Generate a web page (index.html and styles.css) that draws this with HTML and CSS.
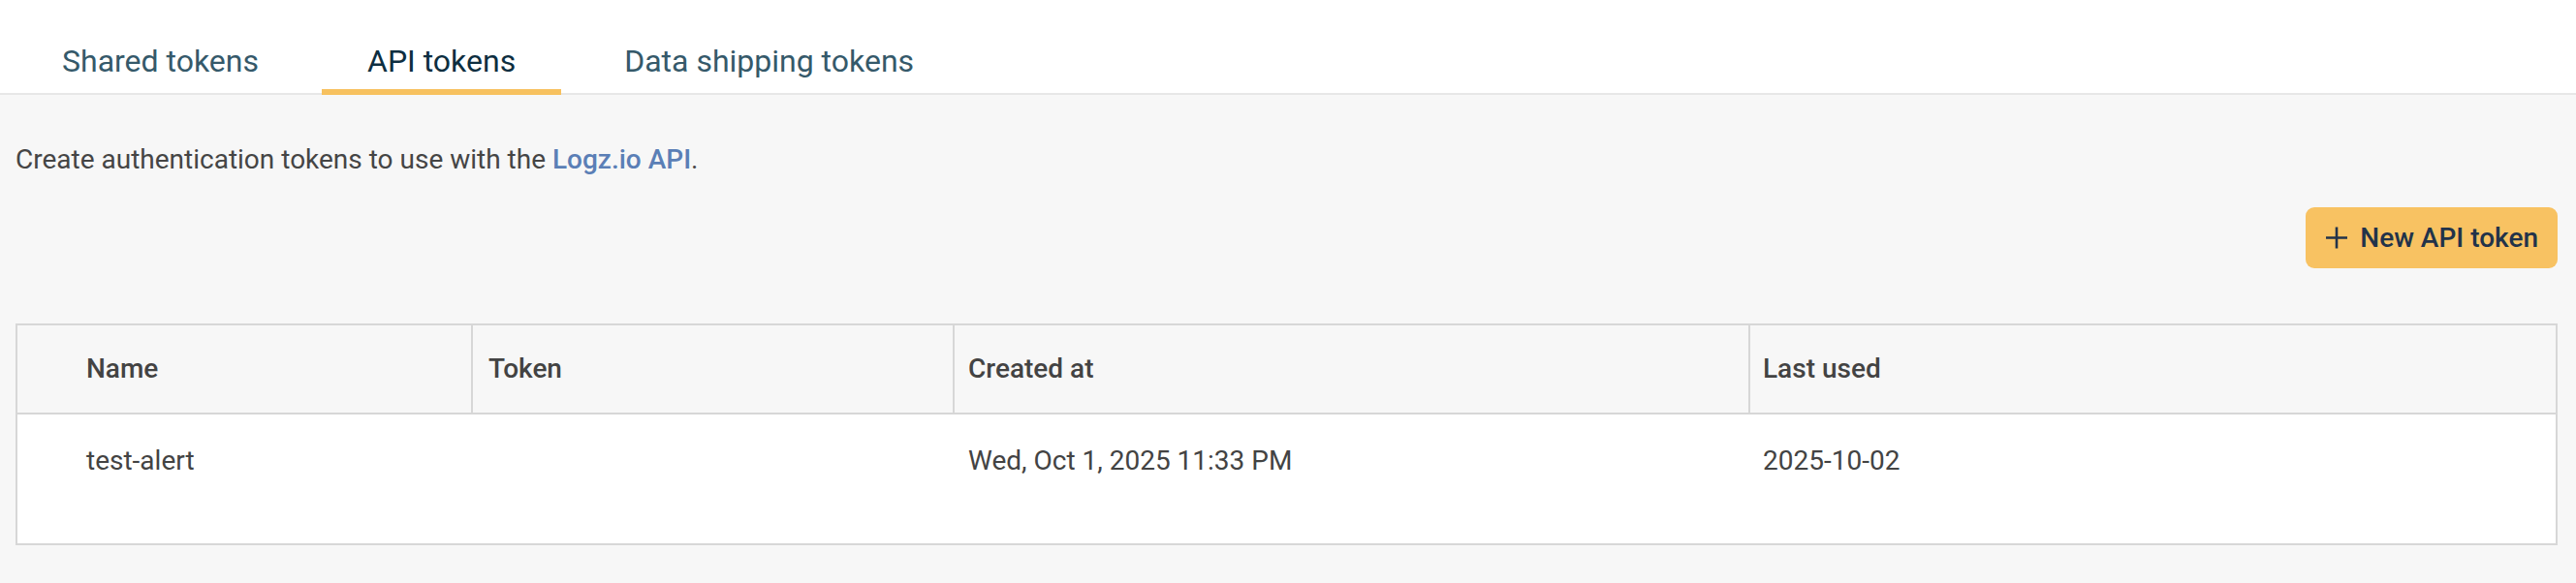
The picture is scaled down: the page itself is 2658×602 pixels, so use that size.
FILE: index.html
```html
<!DOCTYPE html>
<html lang="en">
<head>
<meta charset="utf-8">
<title>API tokens</title>
<link rel="stylesheet" href="styles.css">
</head>
<body>
  <nav class="tabs">
    <a class="tab">Shared tokens</a>
    <a class="tab tab-active">API tokens</a>
    <a class="tab">Data shipping tokens</a>
  </nav>
  <main class="content">
    <p class="desc">Create authentication tokens to use with the <a class="link">Logz.io API</a>.</p>
    <div class="actions">
      <button class="btn">
        <svg class="btn-icon" width="22" height="23" viewBox="0 0 22 23" aria-hidden="true">
          <path d="M11 0.5V22.5M0 11.5H22" stroke="#22334a" stroke-width="2.6" fill="none"/>
        </svg>
        <span>New API token</span>
      </button>
    </div>
    <div class="table">
      <div class="row row-head">
        <div class="cell cell-name">Name</div>
        <div class="cell cell-token">Token</div>
        <div class="cell cell-created">Created at</div>
        <div class="cell cell-used">Last used</div>
      </div>
      <div class="row row-body">
        <div class="cell cell-name">test-alert</div>
        <div class="cell cell-token"></div>
        <div class="cell cell-created">Wed, Oct 1, 2025 11:33 PM</div>
        <div class="cell cell-used">2025-10-02</div>
      </div>
    </div>
  </main>
</body>
</html>
```
FILE: styles.css
```css
* { box-sizing: border-box; }

html, body {
  margin: 0;
  padding: 0;
}

body {
  background: #f7f7f7;
  font-family: Roboto, "Liberation Sans", Arial, sans-serif;
  color: #434343;
}

.tabs {
  display: flex;
  gap: 18px;
  padding: 0 17px;
  background: #ffffff;
  border-bottom: 2px solid #e7e7e7;
}

.tab {
  display: block;
  padding: 44px 47px 10px;
  font-size: 32px;
  line-height: 38px;
  color: #35596a;
  border-bottom: 6px solid transparent;
  margin-bottom: -2px;
  white-space: nowrap;
  cursor: pointer;
}

.tab-active {
  color: #0d2e40;
  border-bottom-color: #f7c15f;
}

.content {
  padding: 50px 19px 0 16px;
}

.desc {
  margin: 0;
  font-size: 28px;
  line-height: 33px;
  color: #454545;
}

.link {
  color: #5b7fb6;
  font-weight: 500;
  cursor: pointer;
}

.actions {
  display: flex;
  justify-content: flex-end;
  margin-top: 33px;
}

.btn {
  display: flex;
  align-items: center;
  gap: 13px;
  height: 63px;
  padding: 0 20px 0 21px;
  border: 0;
  border-radius: 9px;
  background: #f8c262;
  color: #22334a;
  font-family: Roboto, "Liberation Sans", Arial, sans-serif;
  font-size: 28px;
  font-weight: 500;
  line-height: 32px;
  cursor: pointer;
}

.btn-icon {
  display: block;
  flex: none;
}

.table {
  margin-top: 57px;
  border: 2px solid #d7d7d7;
}

.row {
  display: grid;
  grid-template-columns: 470px 497px 821px 1fr;
}

.row-head {
  height: 92px;
  background: #f7f7f7;
  border-bottom: 2px solid #d7d7d7;
}

.row-head .cell {
  display: flex;
  align-items: center;
  font-weight: 500;
  border-right: 2px solid #d7d7d7;
}

.row-head .cell:last-child {
  border-right: 0;
}

.row-body {
  height: 133px;
  background: #ffffff;
}

.row-body .cell {
  padding-top: 32px;
}

.cell {
  font-size: 28px;
  line-height: 32px;
  color: #434343;
  white-space: nowrap;
}

.cell-name { padding-left: 71px; }
.cell-token { padding-left: 16px; }
.cell-created { padding-left: 14px; }
.cell-used { padding-left: 13px; }
```
